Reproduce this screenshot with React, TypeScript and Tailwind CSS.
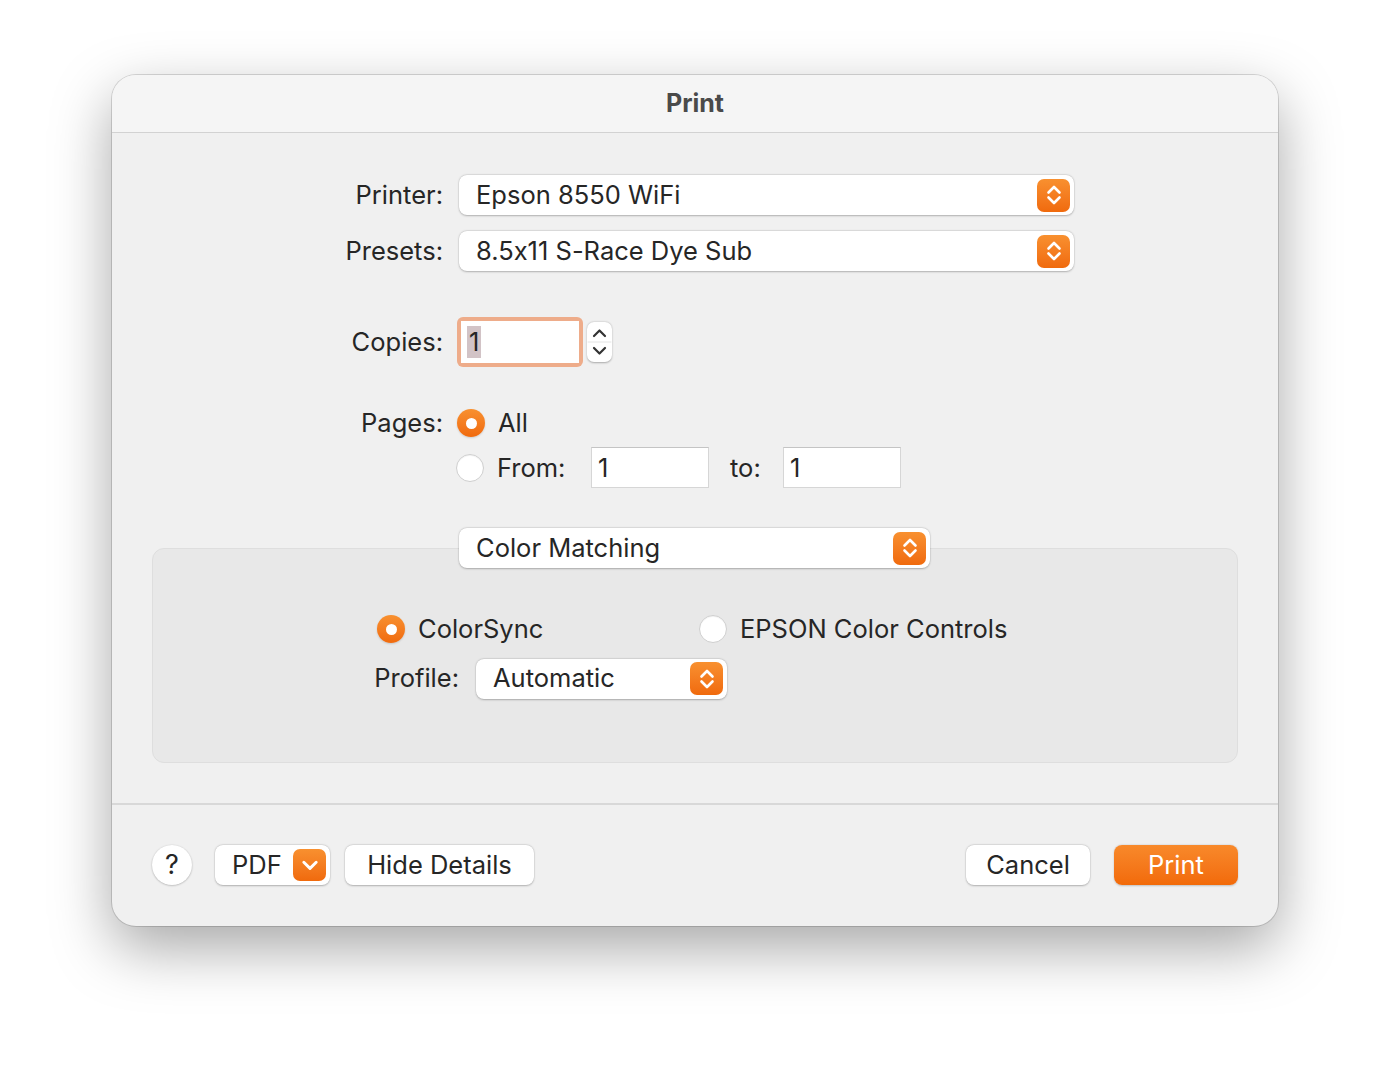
import React from 'react';

const font = { fontFamily: 'Inter, "Noto Sans", sans-serif' };

const Chevrons = ({ className = '' }: { className?: string }) => (
    <svg viewBox="0 0 16 24" className={className} fill="none" stroke="currentColor" strokeWidth="2.6" strokeLinecap="round" strokeLinejoin="round">
        <path d="M2.5 9.5 L8 4 L13.5 9.5" />
        <path d="M2.5 14.5 L8 20 L13.5 14.5" />
    </svg>
);

const OrangeBox = ({ children, className = '' }: { children: React.ReactNode; className?: string }) => (
    <div className={`flex items-center justify-center rounded-[7px] bg-gradient-to-b from-[#f8902f] to-[#f06a0c] text-white ${className}`}>
        {children}
    </div>
);

const Popup = ({ label, width }: { label: string; width: string }) => (
    <div className={`flex h-[40px] ${width} items-center justify-between rounded-[8px] bg-white pl-[17px] pr-[4px] shadow-[0_0.5px_2px_rgba(0,0,0,0.25),0_0_0_0.5px_rgba(0,0,0,0.06)]`}>
        <span>{label}</span>
        <OrangeBox className="h-[33px] w-[33px]">
            <Chevrons className="h-[24px] w-[16px]" />
        </OrangeBox>
    </div>
);

const Radio = ({ on }: { on?: boolean }) =>
    on ? (
        <div className="flex h-[28px] w-[28px] items-center justify-center rounded-full bg-gradient-to-b from-[#f8902f] to-[#f06a0c] shadow-[0_1px_2px_rgba(0,0,0,0.15)]">
            <div className="h-[11px] w-[11px] rounded-full bg-white" />
        </div>
    ) : (
        <div className="h-[28px] w-[28px] rounded-full border border-[#cfcfcf] bg-white shadow-[inset_0_1px_1px_rgba(0,0,0,0.05)]" />
    );

const Field = ({ value, width }: { value: string; width: string }) => (
    <div className={`flex h-[41px] ${width} items-center border border-[#d6d6d6] border-t-[#c4c4c4] bg-white pl-[6px]`}>
        {value}
    </div>
);

const Button = ({ children, className = '' }: { children: React.ReactNode; className?: string }) => (
    <div className={`flex h-[40px] items-center rounded-[8px] bg-white shadow-[0_0.5px_2px_rgba(0,0,0,0.25),0_0_0_0.5px_rgba(0,0,0,0.06)] ${className}`}>
        {children}
    </div>
);

const Label = ({ children }: { children: React.ReactNode }) => (
    <div className="w-[347px] shrink-0 pr-[16px] text-right">{children}</div>
);

export default function App() {
    return (
        <div className="flex h-[1074px] w-[1390px] items-start justify-center bg-white pt-[75px]" style={font}>
            <div className="flex w-[1166px] flex-col overflow-hidden rounded-[24px] bg-[#f0f0f0] text-[25.5px] text-[#262626] shadow-[0_22px_60px_rgba(0,0,0,0.35),0_0_0_1px_rgba(0,0,0,0.14)] [font-feature-settings:'calt'_0]">
                {/* title bar */}
                <div className="flex h-[58px] items-center justify-center border-b border-[#d2d2d2] bg-[#f5f5f5] text-[25px] font-bold text-[#4a4a4a]">
                    Print
                </div>

                {/* body */}
                <div className="flex flex-col pt-[42px]">
                    <div className="flex items-center">
                        <Label>Printer:</Label>
                        <Popup label="Epson 8550 WiFi" width="w-[615px]" />
                    </div>
                    <div className="mt-[16px] flex items-center">
                        <Label>Presets:</Label>
                        <Popup label="8.5x11 S-Race Dye Sub" width="w-[615px]" />
                    </div>

                    <div className="mt-[46px] flex items-center">
                        <div className="w-[345px] shrink-0 pr-[14px] text-right">Copies:</div>
                        <div className="flex h-[50px] w-[126px] items-center rounded-[6px] bg-[#eeac8a] p-[4px]">
                            <div className="flex h-full w-full items-center bg-white pl-[6px]">
                                <span className="bg-[#d2c3c6] px-[2px] leading-[32px]">1</span>
                            </div>
                        </div>
                        <div className="ml-[4px] h-[40px] w-[25px] rounded-[7px] bg-white text-[#333] shadow-[0_0.5px_2px_rgba(0,0,0,0.3)]">
                            <svg viewBox="0 0 25 40" className="h-[40px] w-[25px]" fill="none" stroke="currentColor" strokeWidth="2.2" strokeLinecap="round" strokeLinejoin="round">
                                <path d="M7 14 L12.5 8.5 L18 14" />
                                <path d="M1 20 H24" stroke="#e4e4e4" strokeWidth="1" />
                                <path d="M7 26 L12.5 31.5 L18 26" />
                            </svg>
                        </div>
                    </div>

                    <div className="mt-[37px] flex items-center">
                        <div className="w-[345px] shrink-0 pr-[14px] text-right">Pages:</div>
                        <Radio on />
                        <span className="ml-[13px]">All</span>
                    </div>
                    <div className="mt-[5px] flex items-center">
                        <div className="w-[344px] shrink-0" />
                        <Radio />
                        <span className="ml-[13px] w-[94px]">From:</span>
                        <Field value="1" width="w-[118px]" />
                        <span className="ml-[21px] w-[53px]">to:</span>
                        <Field value="1" width="w-[118px]" />
                    </div>

                    {/* color matching pane */}
                    <div className="mt-[40px] flex flex-col">
                        <div className="relative z-10 flex">
                            <div className="w-[347px] shrink-0" />
                            <Popup label="Color Matching" width="w-[471px]" />
                        </div>
                        <div className="mx-[40px] -mt-[20px] flex h-[215px] flex-col rounded-[12px] border border-[#dedede] bg-[#e8e8e8] pt-[61px]">
                            <div className="flex items-center">
                                <div className="w-[224px] shrink-0" />
                                <Radio on />
                                <span className="ml-[13px] w-[281px]">ColorSync</span>
                                <Radio />
                                <span className="ml-[13px]">EPSON Color Controls</span>
                            </div>
                            <div className="mt-[10px] flex items-center">
                                <div className="w-[323px] shrink-0 pr-[17px] text-right">Profile:</div>
                                <Popup label="Automatic" width="w-[251px]" />
                            </div>
                        </div>
                    </div>

                    <div className="mt-[40px] border-t-[2px] border-[#d8d8d8]" />

                    {/* footer */}
                    <div className="flex items-center px-[40px] pt-[40px] pb-[41px]">
                        <div className="flex h-[40px] w-[40px] items-center justify-center rounded-full bg-white text-[27px] shadow-[0_0.5px_2px_rgba(0,0,0,0.3)]">
                            ?
                        </div>
                        <Button className="ml-[23px] w-[115px] justify-between pl-[17px] pr-[4px]">
                            <span>PDF</span>
                            <OrangeBox className="h-[32px] w-[33px]">
                                <svg viewBox="0 0 16 16" className="h-[18px] w-[18px]" fill="none" stroke="currentColor" strokeWidth="2.6" strokeLinecap="round" strokeLinejoin="round">
                                    <path d="M2.5 5.5 L8 11 L13.5 5.5" />
                                </svg>
                            </OrangeBox>
                        </Button>
                        <Button className="ml-[15px] w-[189px] justify-center">Hide Details</Button>
                        <div className="flex-1" />
                        <Button className="w-[124px] justify-center">Cancel</Button>
                        <div className="ml-[24px] flex h-[40px] w-[124px] items-center justify-center rounded-[8px] bg-gradient-to-b from-[#f8892a] to-[#f26a08] text-white shadow-[0_0.5px_2px_rgba(0,0,0,0.2)]">
                            Print
                        </div>
                    </div>
                </div>
            </div>
        </div>
    );
}
